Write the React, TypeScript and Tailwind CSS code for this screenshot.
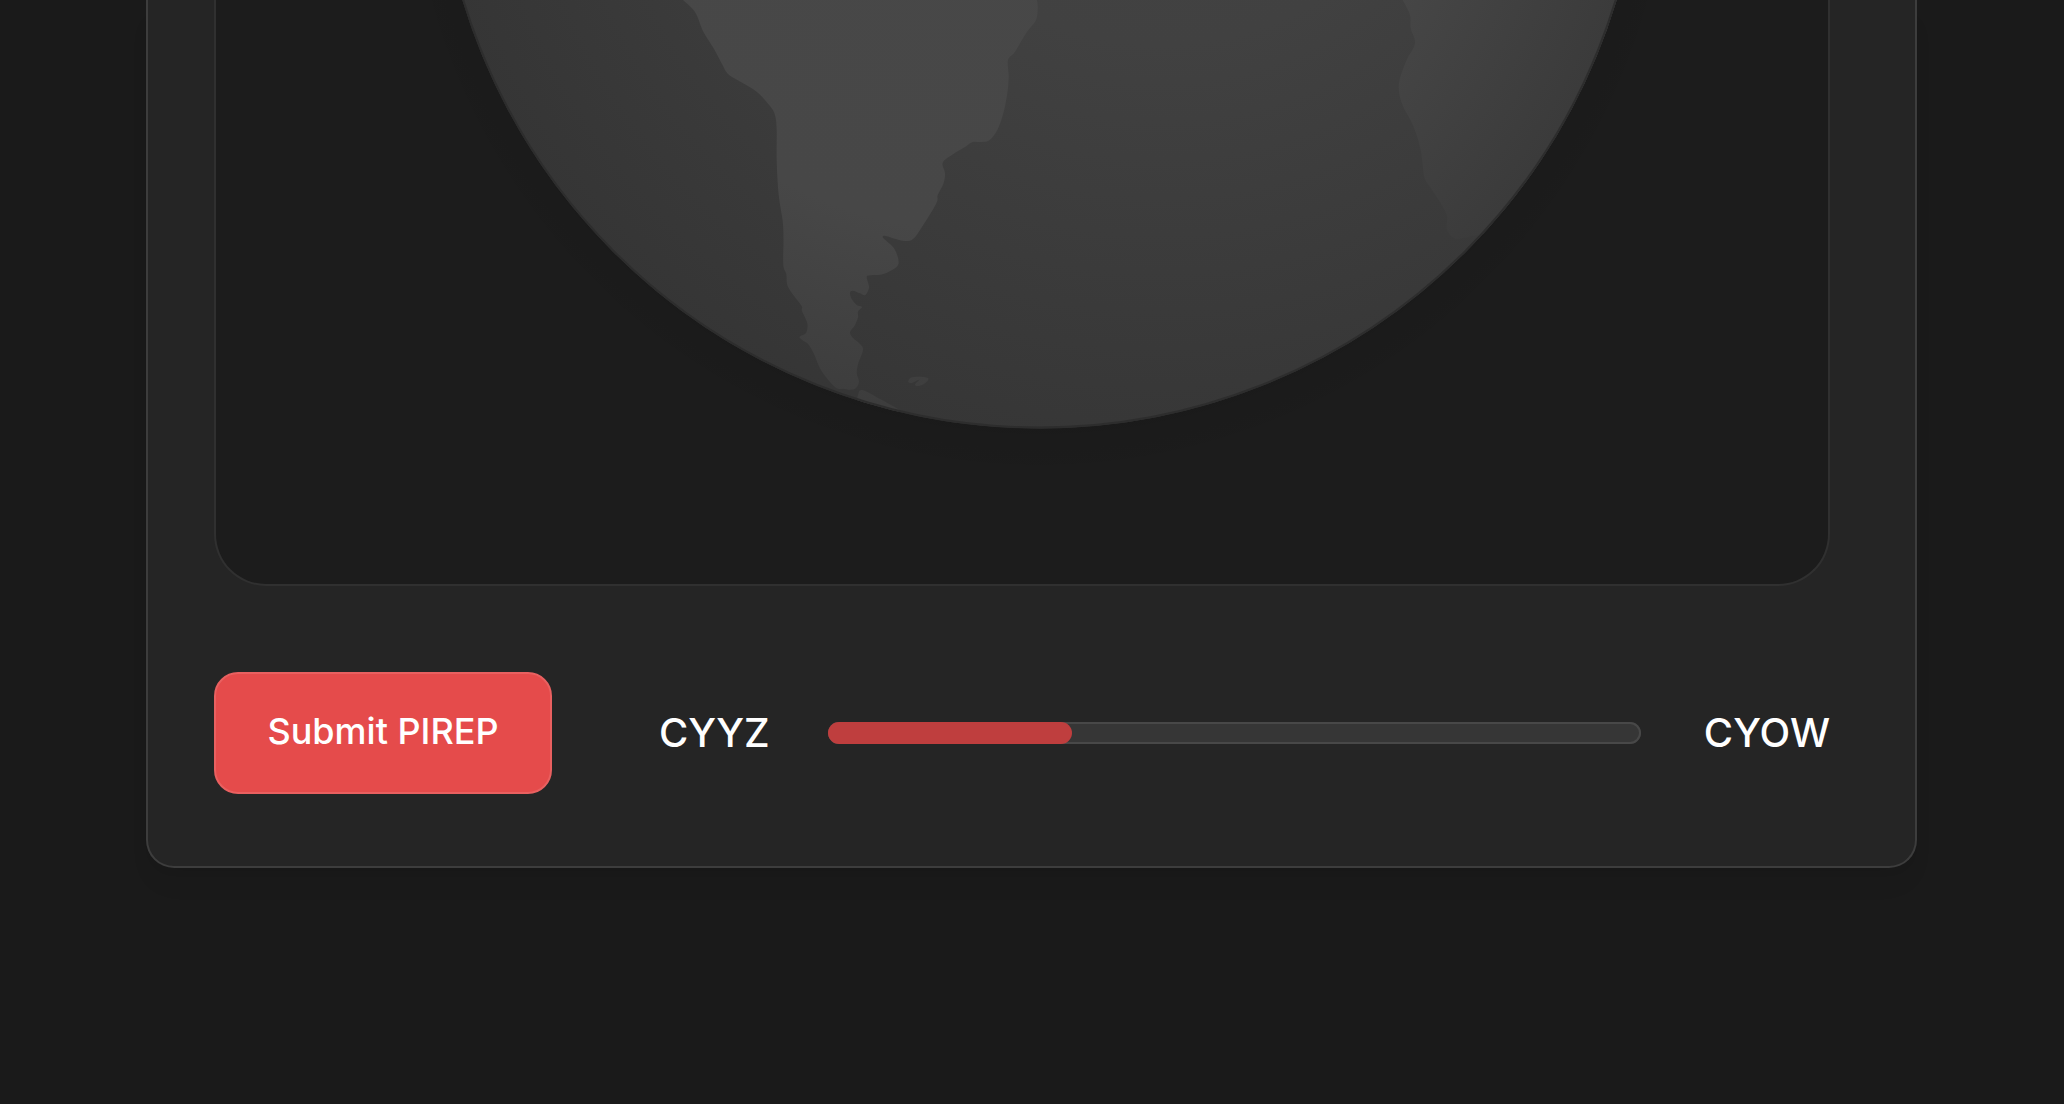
import React from 'react';

type Point = [number, number];

interface GlobeProps {
    label: string;
}

interface RouteProgressProps {
    departure: string;
    arrival: string;
    percent: number;
}

const GLOBE = { cx: 1039.5, cy: -174.5, r: 603 };

const SOUTH_AMERICA: Point[] = [
    [683, 0], [695, 12], [703.5, 32], [713.5, 48], [721.5, 63], [728, 74], [740, 81.5], [757, 92],
    [770, 106], [775, 115], [776.7, 130], [776.7, 160], [778.7, 195], [782.7, 221], [783.5, 240],
    [783.3, 265], [786.3, 274], [787.3, 285], [793.3, 295], [801.7, 306], [802, 311], [807.3, 323.3],
    [806, 333], [799.7, 336.7], [802.3, 340], [808.3, 344.3], [814, 354], [820, 368.3], [828.3, 380],
    [836.7, 388.3], [843.3, 388.7], [850, 389.7], [855.7, 388.3], [859, 381.7], [856.7, 373.3],
    [858.3, 363.3], [863, 350], [860, 344], [853.3, 338.3], [850, 332.3], [855, 325], [858, 317.3],
    [858, 311.7], [862, 307], [856.7, 305], [851.7, 299], [850, 292.7], [852.7, 290.7], [860, 293.3],
    [865.3, 295], [869, 287.3], [866.7, 277.3], [870, 275.3], [883.3, 274], [896.7, 266.7],
    [898.3, 259.3], [894, 248.3], [886.7, 241.3], [882.7, 237.3], [885, 235.7], [895, 238.7],
    [905, 241], [912.7, 239.3], [920, 230], [936, 204], [937.7, 195], [943.3, 184], [945, 173.3],
    [942.7, 162.7], [953.3, 154], [965, 147], [972.7, 142], [981.7, 142], [989.3, 140.3], [997.3, 130],
    [1003.3, 113.3], [1007.3, 93.3], [1008.7, 76.7], [1008, 60], [1015, 51.7], [1026.7, 32.3],
    [1036, 20], [1037.7, 8], [1037, 0],
];

const AFRICA: Point[] = [
    [1402.7, 0], [1410, 15], [1410.7, 28.3], [1415, 43.3], [1406.7, 60], [1400, 78.3], [1399, 91.7],
    [1403.3, 106.7], [1413.3, 126], [1420.7, 150], [1424.3, 176.7], [1430, 186.7], [1438.3, 199.3],
    [1446.7, 215], [1447, 230], [1455, 238.7], [1463.3, 238], [1481.7, 234],
];

const TIERRA_DEL_FUEGO: Point[] = [
    [857, 402], [858, 395], [862.3, 390], [880, 399], [900, 410],
];

const FALKLANDS: Point[] = [
    [908, 381.7], [910.7, 377.7], [920, 376.7], [928.3, 378.3], [925, 383.3], [918.3, 386],
    [915, 384.5], [919.5, 379.5], [911.7, 383], [908, 381.7],
];

// Catmull-Rom through every point, so the coast stays soft between them
const coastline = (points: Point[]): string => {
    let d = `M${points[0][0]} ${points[0][1]}`;
    for (let i = 0; i < points.length - 1; i++) {
        const before = points[i - 1] || points[i];
        const from = points[i];
        const to = points[i + 1];
        const after = points[i + 2] || to;
        d += `C${from[0] + (to[0] - before[0]) / 6} ${from[1] + (to[1] - before[1]) / 6}`;
        d += ` ${to[0] - (after[0] - from[0]) / 6} ${to[1] - (after[1] - from[1]) / 6}`;
        d += ` ${to[0]} ${to[1]}`;
    }
    return d;
};

const Globe: React.FC<GlobeProps> = ({ label }) => {
    return (
        <svg viewBox="216 0 1612 584" className="block h-auto w-full" role="img" aria-label={label}>
            <defs>
                <radialGradient id="ocean" gradientUnits="userSpaceOnUse" cx="1160" cy="-260" r="760">
                    <stop offset="0" stopColor="#444444" />
                    <stop offset="0.4" stopColor="#414141" />
                    <stop offset="0.75" stopColor="#3a3a3a" />
                    <stop offset="1" stopColor="#353535" />
                </radialGradient>
                <radialGradient id="land" gradientUnits="userSpaceOnUse" cx="990" cy="-210" r="680">
                    <stop offset="0" stopColor="#484848" />
                    <stop offset="0.65" stopColor="#474747" />
                    <stop offset="1" stopColor="#3a3a3a" />
                </radialGradient>
                <radialGradient id="halo" gradientUnits="userSpaceOnUse" cx="1039.5" cy="-165" r="645">
                    <stop offset="0.92" stopColor="#000000" stopOpacity="0.06" />
                    <stop offset="1" stopColor="#000000" stopOpacity="0" />
                </radialGradient>
                <clipPath id="disc">
                    <circle cx={GLOBE.cx} cy={GLOBE.cy} r={GLOBE.r} />
                </clipPath>
            </defs>
            <circle cx="1039.5" cy="-165" r="645" fill="url(#halo)" />
            <circle cx={GLOBE.cx} cy={GLOBE.cy} r={GLOBE.r} fill="url(#ocean)" />
            <g clipPath="url(#disc)" fill="url(#land)">
                <path d={`${coastline(SOUTH_AMERICA)}Z`} />
                <path d={`${coastline(AFRICA)}L1700 234L1700 0Z`} />
                <path d={`${coastline(TIERRA_DEL_FUEGO)}L880 430Z`} />
                <path d={`${coastline(FALKLANDS)}Z`} />
            </g>
            <circle cx={GLOBE.cx} cy={GLOBE.cy} r={GLOBE.r - 1} fill="none" stroke="#2d2d2d" strokeWidth="2" />
        </svg>
    );
};

const RouteProgress: React.FC<RouteProgressProps> = ({ departure, arrival, percent }) => {
    return (
        <div className="flex flex-1 items-center text-[40px] leading-[48px] font-medium">
            <span>{departure}</span>
            <div
                role="progressbar"
                aria-label={`${departure} to ${arrival}`}
                aria-valuenow={percent}
                aria-valuemin={0}
                aria-valuemax={100}
                className="mr-[63px] ml-[58px] h-[22px] flex-1 rounded-full bg-[#363636] inset-ring-2 inset-ring-[#484848]"
            >
                <div className="h-full rounded-full bg-[#bf3e3e]" style={{ width: `${percent}%` }} />
            </div>
            <span>{arrival}</span>
        </div>
    );
};

const App: React.FC = () => {
    return (
        <main className="min-h-screen bg-[#1a1a1a] pr-[147px] pl-[146px] font-['Inter',sans-serif] text-white">
            <section className="rounded-b-[28px] border-2 border-t-0 border-[#3d3d3d] bg-[#252525] pr-[85px] pb-[72px] pl-[66px] shadow-xl shadow-black/5">
                <div className="overflow-hidden rounded-b-[52px] border-2 border-t-0 border-[#303030] bg-[#1c1c1c]">
                    <Globe label="Flight map" />
                </div>
                <div className="mt-[86px] flex items-center gap-[107px]">
                    <button
                        type="button"
                        className="h-[122px] w-[338px] rounded-3xl border-2 border-[#e96060] bg-[#e54b4b] pb-1 text-[36px] leading-[44px] font-medium"
                    >
                        Submit PIREP
                    </button>
                    <RouteProgress departure="CYYZ" arrival="CYOW" percent={30} />
                </div>
            </section>
        </main>
    );
};

export default App;
